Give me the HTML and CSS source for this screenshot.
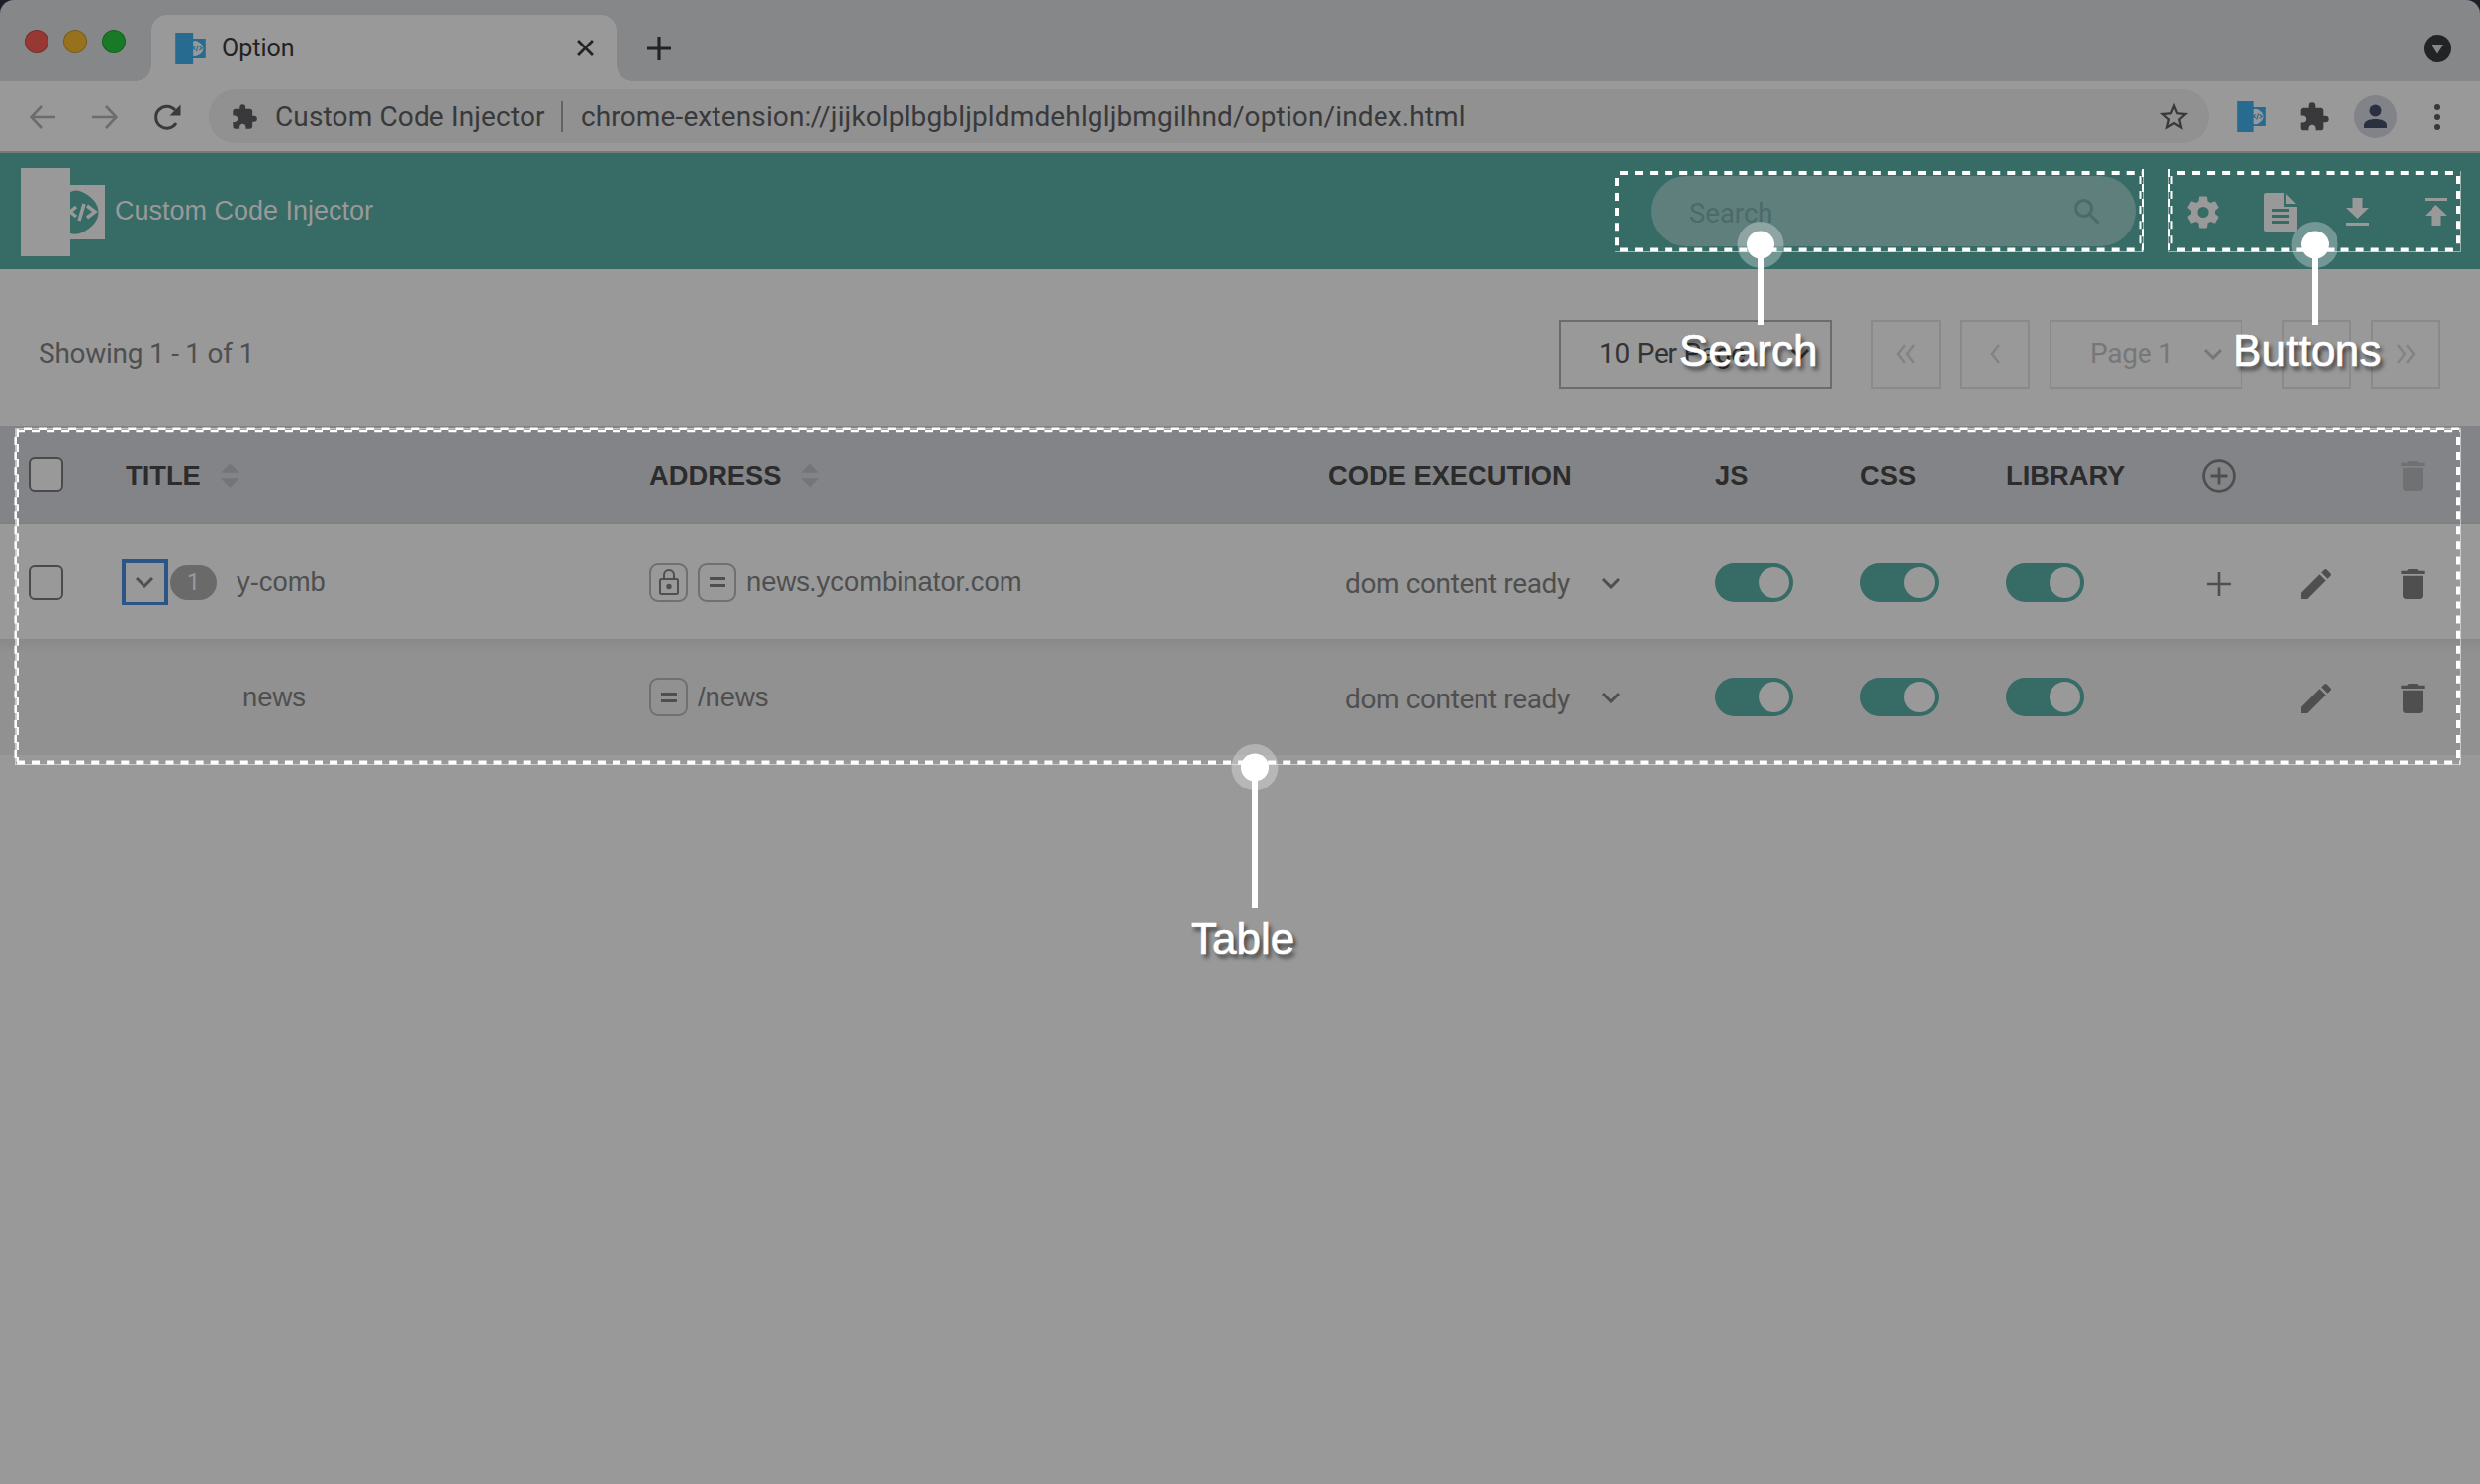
FILE: index.html
```html
<!DOCTYPE html>
<html lang="en">
<head>
<meta charset="utf-8">
<title>Option</title>
<link rel="stylesheet" href="styles.css">
</head>
<body>
<svg width="0" height="0" class="defs">
  <symbol id="puzzle" viewBox="0 0 24 24"><path d="M20.5 11H19V7c0-1.100-.9-2-2-2h-4V3.500a2.500 2.500 0 0 0-5 0V5H4c-1.100 0-1.990.9-1.990 2v3.800H3.500c1.490 0 2.700 1.210 2.700 2.700s-1.210 2.700-2.700 2.700H2V20c0 1.100.9 2 2 2h3.800v-1.500c0-1.490 1.210-2.700 2.700-2.700s2.700 1.210 2.700 2.700V22H17c1.100 0 2-.9 2-2v-4h1.500a2.500 2.500 0 0 0 0-5z"/></symbol>
  <symbol id="logo" viewBox="0 0 85 89"><path fill-rule="evenodd" d="M0 0h50v17h35v55H50v17H0zM50 24v42c4 1 8 1 12-1 22-10 22-31 0-41-4-2-8-2-12 0z"/><path d="M56 39l-6 5 6 5M64 36l-5 17M67 38l8 6-8 6" fill="none" stroke="currentColor" stroke-width="3.500"/></symbol>
  <symbol id="trash" viewBox="0 0 24 24"><path d="M6 19c0 1.100.9 2 2 2h8c1.100 0 2-.9 2-2V7H6v12zM19 4h-3.500l-1-1h-5l-1 1H5v2h14V4z"/></symbol>
  <symbol id="pencil" viewBox="0 0 24 24"><path d="M3 17.250V21h3.750L17.810 9.940l-3.750-3.750L3 17.250zM20.710 7.040a1 1 0 0 0 0-1.410l-2.340-2.340a1 1 0 0 0-1.410 0l-1.830 1.830 3.750 3.750 1.830-1.830z"/></symbol>
  <symbol id="down" viewBox="0 0 20 12"><path d="M2 2l8 8 8-8" fill="none" stroke="currentColor" stroke-width="3"/></symbol>
  <symbol id="sort" viewBox="0 0 20 26"><path d="M0 10L10 0l10 10zM0 16h20L10 26z"/></symbol>
</svg>

<div class="tabstrip">
  <div class="lights"><i class="red"></i><i class="amber"></i><i class="green"></i></div>
  <div class="tab">
    <svg class="favicon" preserveAspectRatio="none"><use href="#logo"/></svg>
    <span>Option</span>
    <svg class="close" viewBox="0 0 16 16"><path d="M1 1l14 14M15 1L1 15"/></svg>
  </div>
  <svg class="newtab" viewBox="0 0 24 24"><path d="M12 0v24M0 12h24"/></svg>
  <svg class="tabmenu" viewBox="0 0 28 28"><circle cx="14" cy="14" r="14"/><path d="M8 10h12l-6 9.500z" fill="#868789"/></svg>
</div>

<div class="toolbar">
  <svg class="nav dim" viewBox="0 0 26 24"><path d="M26 12H2M12 1L1.500 12 12 23"/></svg>
  <svg class="nav dim fwd" viewBox="0 0 26 24"><path d="M0 12h24M14 1l10.500 11L14 23"/></svg>
  <svg class="reload" viewBox="0 0 28 28"><path d="M23 20a11 11 0 1 1-1-13" fill="none" stroke="#393a3c" stroke-width="3"/><path d="M27.500 1.500v11h-11z" fill="#393a3c"/></svg>
  <div class="omnibox">
    <svg class="ext"><use href="#puzzle"/></svg>
    <span class="owner">Custom Code Injector</span>
    <i class="bar"></i>
    <span class="url">chrome-extension://jijkolplbgbljpldmdehlgljbmgilhnd/option/index.html</span>
    <svg class="star" viewBox="0 0 24 24"><path d="M22 9.240l-7.190-.62L12 2 9.190 8.630 2 9.240l5.460 4.730L5.820 21 12 17.270 18.180 21l-1.630-7.030L22 9.240zM12 15.400l-3.760 2.270 1-4.280-3.320-2.880 4.380-.38L12 6.100l1.710 4.040 4.380.38-3.320 2.880 1 4.280L12 15.400z"/></svg>
  </div>
  <svg class="extlogo"><use href="#logo"/></svg>
  <svg class="extpuzzle"><use href="#puzzle"/></svg>
  <svg class="avatar" viewBox="0 0 43 43"><circle cx="21.500" cy="21.500" r="21.500" fill="#828389"/><g fill="#2b3040"><circle cx="21.500" cy="15.500" r="6"/><path d="M10 33v-3c0-8 23-8 23 0v3z"/></g></svg>
  <svg class="dots" viewBox="0 0 6 26"><circle cx="3" cy="3" r="3"/><circle cx="3" cy="13" r="3"/><circle cx="3" cy="23" r="3"/></svg>
</div>

<header class="appbar">
  <svg class="applogo"><use href="#logo"/></svg>
  <span class="appname">Custom Code Injector</span>
  <div class="search"><span>Search</span><svg viewBox="0 0 26 26"><circle cx="9.500" cy="9.500" r="8"/><path d="M15.500 15.500l9 9"/></svg></div>
  <div class="actions">
    <svg class="gear" viewBox="2 2 20 20"><path d="M19.430 12.980c.04-.32.07-.64.07-.98s-.03-.66-.07-.98l2.110-1.650a.5.5 0 0 0 .12-.64l-2-3.460a.5.5 0 0 0-.61-.22l-2.490 1a7.300 7.300 0 0 0-1.690-.98l-.38-2.650A.49.49 0 0 0 14 2h-4a.49.49 0 0 0-.49.42l-.38 2.650c-.61.25-1.170.59-1.690.98l-2.490-1a.49.49 0 0 0-.61.22l-2 3.460a.49.49 0 0 0 .12.64l2.110 1.650a7.900 7.900 0 0 0 0 1.960l-2.110 1.650a.5.5 0 0 0-.12.640l2 3.460c.12.220.390.300.610.220l2.490-1c.52.400 1.080.730 1.690.980l.38 2.650c.03.240.240.420.490.420h4c.25 0 .46-.18.490-.42l.38-2.650c.61-.25 1.170-.59 1.690-.98l2.490 1c.23.090.490 0 .610-.22l2-3.460a.5.500 0 0 0-.12-.64l-2.110-1.650zM12 15.500a3.500 3.500 0 1 1 0-7 3.500 3.500 0 0 1 0 7z"/></svg>
    <svg class="doc" viewBox="0 0 33 39"><path fill-rule="evenodd" d="M2 0h18v14h13v23q0 2-2 2H2q-2 0-2-2V2q0-2 2-2zM8 16v3h17v-3zM8 22v3h17v-3zM8 28v3h17v-3z"/><path d="M22 1l10 10H22z"/></svg>
    <svg class="dl" viewBox="0 0 23 28"><path d="M6.500 0h10v10H23L11.500 21 0 10h6.500zM0 25h23v3H0z"/></svg>
    <svg class="ul" viewBox="0 0 23 28"><path d="M0 0h23v3H0zM11.500 7L23 18h-6.500v10h-10V18H0z"/></svg>
  </div>
</header>

<div class="pager">
  <span class="showing">Showing 1 - 1 of 1</span>
  <div class="box per"><span>10 Per Page</span><svg class="chev"><use href="#down"/></svg></div>
  <div class="box off"><svg viewBox="0 0 20 20"><path d="M9 1L2 10l7 9M18 1l-7 9 7 9"/></svg></div>
  <div class="box off"><svg viewBox="0 0 20 20"><path d="M14 1l-7 9 7 9"/></svg></div>
  <div class="box off page"><span>Page 1</span><svg class="chev"><use href="#down"/></svg></div>
  <div class="box off next"><svg viewBox="0 0 20 20"><path d="M6 1l7 9-7 9"/></svg></div>
  <div class="box off"><svg viewBox="0 0 20 20"><path d="M2 1l7 9-7 9M11 1l7 9-7 9"/></svg></div>
</div>

<div class="table">
  <div class="row head">
    <div><i class="check"></i></div>
    <div class="th">TITLE<svg class="sort"><use href="#sort"/></svg></div>
    <div class="th">ADDRESS<svg class="sort"><use href="#sort"/></svg></div>
    <div class="th">CODE EXECUTION</div>
    <div class="th">JS</div>
    <div class="th">CSS</div>
    <div class="th">LIBRARY</div>
    <div><svg class="plus-c" viewBox="0 0 32 32"><circle cx="16" cy="16" r="14.500"/><path d="M16 8v16M8 16h16"/></svg></div>
    <div></div>
    <div><svg class="trash faint"><use href="#trash"/></svg></div>
  </div>
  <div class="row main">
    <div><i class="check"></i></div>
    <div><span class="expand"><svg class="chev"><use href="#down"/></svg></span><span class="badge">1</span><span class="name">y-comb</span></div>
    <div><span class="chip"><svg viewBox="0 0 20 26"><rect x="1" y="10" width="18" height="15" rx="1.500"/><path d="M5 10V6a5 5 0 0 1 10 0v4"/><circle cx="10" cy="17.500" r="1.700" fill="#4f4f4f"/></svg></span><span class="chip"><i class="eq"></i></span><span>news.ycombinator.com</span></div>
    <div class="run"><span>dom content ready</span><svg class="chev"><use href="#down"/></svg></div>
    <div><i class="toggle"></i></div>
    <div><i class="toggle"></i></div>
    <div><i class="toggle"></i></div>
    <div><svg class="plus" viewBox="0 0 24 24"><path d="M12 0v24M0 12h24"/></svg></div>
    <div><svg class="pencil"><use href="#pencil"/></svg></div>
    <div><svg class="trash"><use href="#trash"/></svg></div>
  </div>
  <div class="row sub">
    <div></div>
    <div><span class="child">news</span></div>
    <div><span class="chip"><i class="eq"></i></span><span>/news</span></div>
    <div class="run"><span>dom content ready</span><svg class="chev"><use href="#down"/></svg></div>
    <div><i class="toggle"></i></div>
    <div><i class="toggle"></i></div>
    <div><i class="toggle"></i></div>
    <div></div>
    <div><svg class="pencil"><use href="#pencil"/></svg></div>
    <div><svg class="trash"><use href="#trash"/></svg></div>
  </div>
</div>

<svg class="overlay" viewBox="0 0 2506 1500">
  <g fill="none" stroke="#fff" stroke-width="4" stroke-dasharray="8 7.050">
    <path d="M1637 175H2165M1637 252.500H2165M1634 180V253"/>
    <path d="M2200 175H2484M2200 252.500H2484M2484 178V253"/>
    <path d="M2484 442V770M17 770.500H2486"/>
  </g>
  <g fill="none" stroke="#fff" stroke-width="2.500" stroke-dasharray="8 7.050">
    <path d="M17 436H2486M24 433.700H2486M17.700 434V770M15.700 442V770"/>
    <path stroke-width="2" d="M2162.500 178V253M2165 171V253M2192 171V253M2194.500 178V253"/>
  </g>
  <g fill="none" stroke="#fff" stroke-opacity=".5" stroke-width="1">
    <path d="M1632 254.500H2165.500V173M2191.500 173V254.500H2486.500V173M15.500 772.500V433.500H2486.500V772.500H15"/>
  </g>
  <g fill="#fff">
    <g fill-opacity=".3"><circle cx="1779" cy="247.500" r="23.500"/><circle cx="2339" cy="247.500" r="23.500"/><circle cx="1268" cy="775.500" r="23.500"/></g>
    <circle cx="1779" cy="247.500" r="14"/><circle cx="2339" cy="247.500" r="14"/><circle cx="1268" cy="775.500" r="14"/>
    <path d="M1776 250h6v78h-6zM2336 250h6v78h-6zM1265 778h6v140h-6z"/>
  </g>
</svg>
<span class="label l-search">Search</span>
<span class="label l-buttons">Buttons</span>
<span class="label l-table">Table</span>
</body>
</html>
```
FILE: styles.css
```css
* { box-sizing: border-box; }
body { margin: 0; width: 2506px; height: 1500px; overflow: hidden; position: relative; background: #999; color: #4f4f4f; font-family: "Liberation Sans", Arial, sans-serif; font-size: 28px; }
svg { display: block; flex: none; fill: currentColor; }
.defs { position: absolute; }

.tabstrip { height: 82px; display: flex; align-items: flex-end; background: #868789; border-radius: 14px 14px 0 0; box-shadow: 0 -14px 0 14px #1c2026; font-family: Roboto, sans-serif; position: relative; }
.lights { display: flex; gap: 15px; padding: 0 0 28px 25px; width: 153px; }
.lights i { width: 24px; height: 24px; border-radius: 50%; border: 1px solid #0003; }
.red { background: #973833; }
.amber { background: #98711d; }
.green { background: #187a27; }
.tab { position: relative; width: 470px; height: 67px; border-radius: 16px 16px 0 0; background: #999; display: flex; align-items: center; padding: 0 23px 0 24px; color: #222324; font-size: 25px; }
.tab::before, .tab::after { content: ""; position: absolute; bottom: 0; width: 16px; height: 16px; }
.tab::before { left: -16px; background: radial-gradient(circle at 0 0, #868789 15.500px, #999 16px); }
.tab::after { right: -16px; background: radial-gradient(circle at 100% 0, #868789 15.500px, #999 16px); }
.favicon { width: 31px; height: 32px; margin-right: 16px; color: #276b91; }
.close { width: 17px; height: 17px; margin-left: auto; stroke: #222324; stroke-width: 2.600; }
.newtab { width: 24px; height: 24px; margin: 0 0 21px 31px; stroke: #222324; stroke-width: 3.200; }
.tabmenu { width: 28px; height: 28px; margin: 0 29px 19px auto; color: #222324; }

.toolbar { height: 73px; border-bottom: 2px solid #77797b; display: flex; align-items: center; padding: 0 40px 0 30px; font-family: Roboto, sans-serif; color: #39393b; }
.nav { width: 26px; height: 24px; fill: none; stroke: #6c6c6c; stroke-width: 2.600; }
.fwd { margin-left: 37px; }
.reload { width: 28px; height: 28px; margin: 0 28px 0 36px; }
.omnibox { width: 2021px; height: 55px; border-radius: 28px; background: #909190; display: flex; align-items: center; padding: 0 18px 0 22px; letter-spacing: .14px; }
.ext { width: 28px; height: 28px; margin-right: 17px; }
.owner { width: 289px; white-space: nowrap; }
.bar { width: 2px; height: 31px; background: #626363; margin-right: 18px; }
.star { width: 34px; height: 34px; margin-left: auto; }
.extlogo { width: 30px; height: 31px; margin-left: 28px; color: #276b91; }
.extpuzzle { width: 32px; height: 32px; margin-left: 32px; }
.avatar { width: 43px; height: 43px; margin-left: 25px; }
.dots { width: 6px; height: 26px; margin-left: auto; }

.appbar { height: 117px; background: #376b66; color: #999; display: flex; align-items: center; padding: 0 33px 0 21px; font-size: 27px; }
.applogo { width: 85px; height: 89px; margin: 1px 10px 0 0; }
.appname { margin-bottom: 1px; }
.search { width: 490px; height: 71px; border-radius: 36px; background: #5f7f7d; margin-left: auto; display: flex; align-items: center; justify-content: space-between; padding: 3px 36px 0 39px; color: #4b6b69; font-family: Roboto, sans-serif; font-size: 27.500px; }
.search svg { width: 26px; height: 26px; margin-top: -3px; fill: none; stroke: #4b6b69; stroke-width: 3; }
.actions { display: flex; align-items: center; margin-left: 52px; padding-top: 1px; }
.gear { width: 32px; height: 33px; }
.doc { width: 33px; height: 39px; margin-left: 46px; }
.dl { width: 23px; height: 28px; margin-left: 50px; }
.ul { width: 23px; height: 28px; margin-left: 56px; }

.pager { height: 159px; display: flex; align-items: center; padding: 17px 40px 5px 39px; gap: 20px; font-family: Roboto, sans-serif; letter-spacing: -.25px; }
.showing { margin-right: auto; }
.box { height: 70px; width: 70px; border: 2px solid #6c6c6c; display: flex; align-items: center; justify-content: center; }
.box.off { border-color: #8a8a8a; color: #777; }
.box svg:not(.chev) { width: 20px; height: 20px; fill: none; stroke: #838383; stroke-width: 2.500; }
.box.per { width: 276px; margin-right: 20px; justify-content: space-between; padding: 0 20px 0 39px; color: #333; }
.box.page { width: 195px; justify-content: space-between; padding: 0 18px 0 39px; }
.box.next { margin-left: 20px; }
.chev { width: 20px; height: 12px; }

.row { display: grid; grid-template-columns: 98px 529px 686px 391px 147px 147px 195px 98px 98px 88px; padding-left: 29px; align-items: center; width: 2506px; font-size: 27.400px; }
.row > div { display: flex; align-items: center; white-space: nowrap; }
.head { height: 99px; background: #838487; color: #2c2c2c; border-bottom: 2px solid #7f8081; }
.head .th { font-weight: bold; font-size: 27.300px; padding-top: 3px; }
.sort { width: 19px; height: 25px; margin: -1px 0 0 20px; color: #747578; }
.main { height: 116px; }
.sub { height: 117px; background: linear-gradient(#898989, #919191 14px); }
.check { width: 35px; height: 35px; border: 2px solid #4a4a4a; border-radius: 6px; background: #999; }
.expand { width: 47px; height: 47px; border: 4px solid #2a5585; margin-left: -4px; display: flex; align-items: center; justify-content: center; padding-right: 2px; }
.badge { width: 47px; height: 35px; border-radius: 18px; background: #6a6a6a; color: #999; margin: 0 20px 0 2px; font: 24px/35px Roboto, sans-serif; text-align: center; }
.child { margin-left: 118px; }
.chip { width: 39px; height: 39px; border: 2px solid #707070; border-radius: 9px; margin-right: 10px; display: flex; align-items: center; justify-content: center; }
.chip svg { width: 20px; height: 26px; fill: none; stroke: #4f4f4f; stroke-width: 2; }
.eq { width: 16px; height: 10px; border: solid #4f4f4f; border-width: 3px 0; }
.run { font-family: Roboto, sans-serif; font-size: 28px; letter-spacing: -.38px; padding: 3px 0 0 17px; }
.run .chev { margin-left: 32px; margin-top: -2px; }
.toggle { width: 79px; height: 39px; border-radius: 20px; background: #376b66; display: flex; justify-content: flex-end; padding: 4px; }
.toggle::after { content: ""; width: 31px; height: 31px; border-radius: 50%; background: #999; }
.plus-c { width: 34px; height: 34px; margin: 2px 0 0 3px; fill: none; stroke: #4f4f4f; stroke-width: 2.600; }
.plus { width: 24px; height: 24px; margin: 3px 0 0 8px; stroke: #4f4f4f; stroke-width: 2.600; }
.pencil { width: 40px; height: 40px; margin: 3px 0 0 0; }
.trash { width: 40px; height: 40px; margin: 3px 0 0 0; }
.faint { color: #707173; margin-top: 2px; }

.overlay { position: absolute; inset: 0; width: 2506px; height: 1500px; }
.label { position: absolute; color: #fff; font-size: 44px; line-height: 50px; text-shadow: 3px 4px 4px #0009; -webkit-text-stroke: .7px #fff; }
.l-search { left: 1697px; top: 330px; }
.l-buttons { left: 2256px; top: 330px; letter-spacing: .2px; }
.l-table { left: 1203px; top: 924px; }
```
